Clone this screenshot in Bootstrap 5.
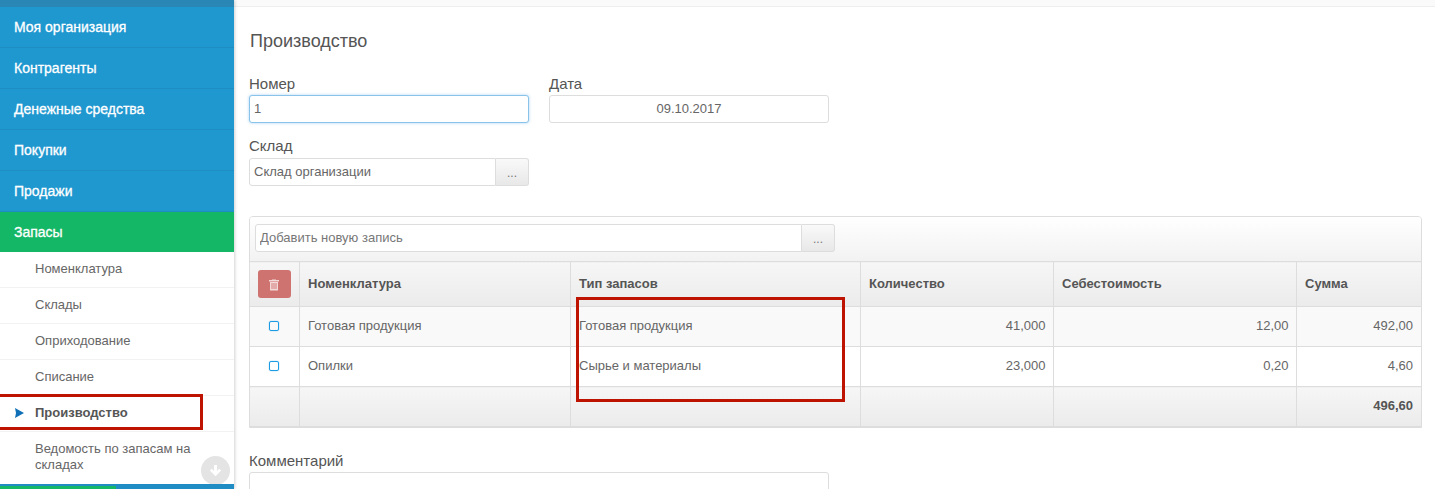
<!DOCTYPE html>
<html lang="ru">
<head>
<meta charset="utf-8">
<title>Производство</title>
<link href="https://cdn.jsdelivr.net/npm/bootstrap@5.3.0/dist/css/bootstrap.min.css" rel="stylesheet">
<style>
html,body{height:489px;overflow:hidden;}
body{font-family:"Liberation Sans",Arial,sans-serif;font-size:13px;color:#555;background:#fff;position:relative;}
.shell{height:489px;}
.side{width:234px;flex:none;background:#fff;box-shadow:1px 0 3px rgba(0,0,0,.18);position:relative;z-index:2;overflow:hidden;height:489px;}
.side-top{height:7px;background:#2a87b5;}
.mainlink{height:41px;display:flex;align-items:center;padding-left:14px;background:#1f97cf;color:#fff;font-size:14px;font-weight:400;text-decoration:none;border-bottom:1px solid #1d8dc2;-webkit-text-stroke:.3px #fff;}
.mainlink.on{background:#14b765;border-bottom:0;height:40px;}
.sublink{min-height:36px;display:flex;align-items:center;padding:0 30px 2px 35px;color:#666;font-size:13px;line-height:16px;text-decoration:none;border-bottom:1px solid #f2f2f2;position:relative;}
.sublink.tall{height:52px;border:0;}
.sublink.cur{font-weight:700;color:#555;}
.arrow{position:absolute;left:15px;top:12px;display:block;}
.scrolldown{position:absolute;left:201px;top:456px;width:29px;height:29px;border-radius:50%;background:#e4e4e4;display:flex;align-items:center;justify-content:center;}
.side-foot{position:absolute;left:0;right:0;top:484px;height:5px;background:#1f8cc4;}
.side-foot span{display:block;width:116px;height:3px;background:#14b765;margin-top:2px;}
.content{flex:1;min-width:0;}
.topstrip{height:7px;background:#fafafa;border-bottom:1px solid #eee;}
.pagehead{font-size:18px;font-weight:400;color:#555;margin:25px 0 0 16px;line-height:18px;height:18px;}
.formarea{padding-left:15px;padding-right:13px;}
.formtop{column-gap:20px;margin-top:26px;}
.lab{display:block;font-size:15px;line-height:16px;color:#555;margin:0;}
.fld{height:28px;border:1px solid #ddd;border-radius:3px;font-size:13px;color:#666;padding:0 4px 2px;background:#fff;box-shadow:none;}
.fld.hot{border-color:#8ac3ea;box-shadow:0 0 3px rgba(82,168,236,.5);}
.fld::placeholder{color:#777;}
.w280{width:280px;}
.gap3{margin-top:3px;}
.dots{width:33px;height:28px;flex:none;border:1px solid #ddd;border-left:0;border-radius:0 3px 3px 0;background:linear-gradient(#f9f9f9,#e8e8e8);color:#777;font-size:12px;padding:0;line-height:28px;}
.panelbox{margin-top:30px;border:1px solid #ddd;border-radius:4px 4px 0 0;overflow:hidden;}
.toolbar{height:44px;padding:7px 0 0 5px;background:linear-gradient(#fff,#f2f2f2);display:flex;}
.toolbar .fld{width:547px;flex:none;border-radius:3px 0 0 3px;}
.grid{margin:0;table-layout:fixed;width:1171px;border-collapse:collapse;}
.grid td,.grid th{border:1px solid #ddd;padding:0 7px 2px 8.500px;vertical-align:middle;font-size:13px;color:#666;box-shadow:none;background:transparent;}
.grid th{padding-bottom:0;}
.grid tr>*:first-child{border-left:0;text-align:center;padding:0 0 2px;}
.grid tr>*:last-child{border-right:0;padding-right:8px;}
.grid th{height:45px;font-weight:700;color:#555;background:linear-gradient(#f6f6f6,#ebebeb);}
.grid thead th:first-child{padding:0;}
.grid .rw1 td{height:40px;background:#f9f9f9;}
.grid .rw2 td{height:40px;background:#fff;}
.grid .tot td{height:40px;background:linear-gradient(#f6f6f6,#ebebeb);font-weight:700;color:#555;border-bottom:1px solid #ddd;}
.num{text-align:right;}
.trash{width:33px;height:28px;border:0;border-radius:3px;background:#cf7371;padding:0;display:inline-flex;align-items:center;justify-content:center;vertical-align:middle;}
.chk{display:block;width:10px;height:10px;margin:0 auto;border:1px solid #1a9be2;border-radius:2px;box-shadow:0 0 1px #1a9be2;}
.notewrap{margin-top:25px;}
.note{width:580px;height:40px;border:1px solid #ddd;border-radius:3px;margin-top:3px;}
.redbox{position:absolute;border:3px solid #bd1300;z-index:5;pointer-events:none;}
.rb1{left:0;top:394px;width:203px;height:36px;border-left:0;}
.rb2{left:576px;top:297px;width:269px;height:105px;}
</style>
</head>
<body>
<div class="d-flex shell">
  <nav class="side">
    <div class="side-top"></div>
    <a class="mainlink" href="#">Моя организация</a>
    <a class="mainlink" href="#">Контрагенты</a>
    <a class="mainlink" href="#">Денежные средства</a>
    <a class="mainlink" href="#">Покупки</a>
    <a class="mainlink" href="#">Продажи</a>
    <a class="mainlink on" href="#">Запасы</a>
    <a class="sublink" href="#">Номенклатура</a>
    <a class="sublink" href="#">Склады</a>
    <a class="sublink" href="#">Оприходование</a>
    <a class="sublink" href="#">Списание</a>
    <a class="sublink cur" href="#"><svg class="arrow" width="9" height="10" viewBox="0 0 9 10"><path d="M0 0 9 5 0 10 1 5z" fill="#0f70b7"/></svg>Производство</a>
    <a class="sublink tall" href="#">Ведомость по запасам на складах</a>
    <div class="scrolldown"><svg width="15" height="15" viewBox="0 0 16 16"><path d="M8 14 2 8l2-2 2.500 2.500V2h3v6.500L12 6l2 2z" fill="#fff"/></svg></div>
    <div class="side-foot"><span></span></div>
  </nav>
  <main class="content">
    <div class="topstrip"></div>
    <h1 class="pagehead">Производство</h1>
    <div class="formarea">
      <div class="d-flex formtop">
        <div class="w280"><label class="lab">Номер</label><input class="form-control fld hot w280 gap3" value="1"></div>
        <div class="w280"><label class="lab">Дата</label><input class="form-control fld w280 text-center gap3" value="09.10.2017"></div>
      </div>
      <label class="lab" style="margin-top:15px">Склад</label>
      <div class="d-flex w280" style="margin-top:4px"><input class="form-control fld" style="border-radius:3px 0 0 3px" value="Склад организации"><button class="btn dots" type="button">...</button></div>
      <div class="panelbox">
        <div class="toolbar"><input class="form-control fld" placeholder="Добавить новую запись"><button class="btn dots" type="button">...</button></div>
        <table class="table grid">
          <colgroup><col style="width:49px"><col style="width:271px"><col style="width:290px"><col style="width:193px"><col style="width:243px"><col style="width:125px"></colgroup>
          <thead><tr><th><button class="trash" type="button"><svg width="12" height="13" viewBox="0 0 12 13"><path d="M4 1.500h4V1H4zM1 2h10v1.500H1zM2 4h8v8.500H2z" fill="#f3d9d8"/><path d="M4 5v6M6 5v6M8 5v6" stroke="#cf7371" stroke-width=".9"/></svg></button></th><th>Номенклатура</th><th>Тип запасов</th><th>Количество</th><th>Себестоимость</th><th>Сумма</th></tr></thead>
          <tbody>
            <tr class="rw1"><td><span class="chk"></span></td><td>Готовая продукция</td><td>Готовая продукция</td><td class="num">41,000</td><td class="num">12,00</td><td class="num">492,00</td></tr>
            <tr class="rw2"><td><span class="chk"></span></td><td>Опилки</td><td>Сырье и материалы</td><td class="num">23,000</td><td class="num">0,20</td><td class="num">4,60</td></tr>
            <tr class="tot"><td></td><td></td><td></td><td></td><td></td><td class="num">496,60</td></tr>
          </tbody>
        </table>
      </div>
      <div class="notewrap"><label class="lab">Комментарий</label><div class="note"></div></div>
    </div>
  </main>
</div>
<div class="redbox rb1"></div>
<div class="redbox rb2"></div>
<script src="https://cdn.jsdelivr.net/npm/bootstrap@5.3.0/dist/js/bootstrap.bundle.min.js"></script>
</body>
</html>
